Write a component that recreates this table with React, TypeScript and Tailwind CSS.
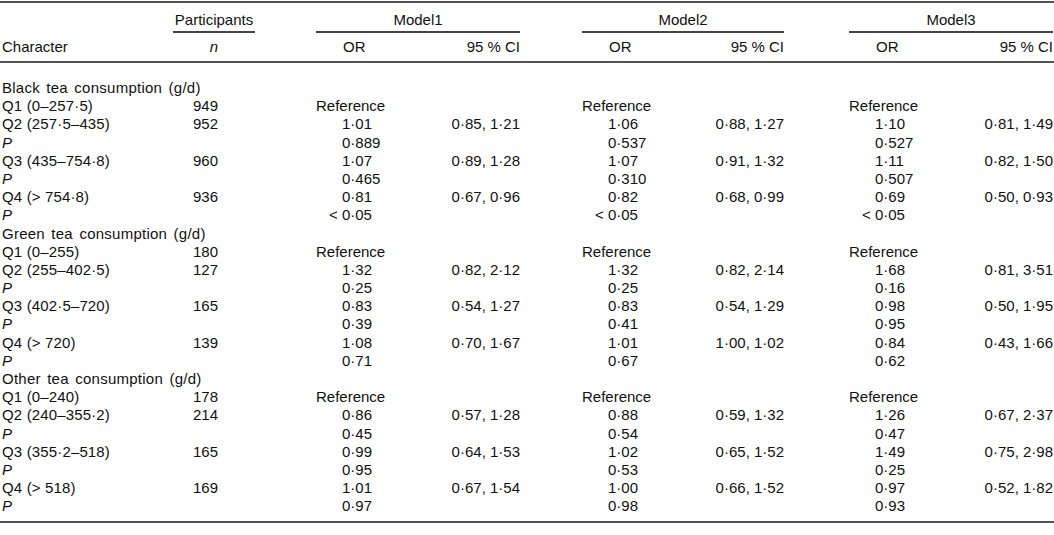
import React from 'react';

type Cell = { or?: string; ci?: string };
type Row = { label: string; italic?: boolean; n?: string; m?: Cell[]; group?: boolean };

// 表の列幅 (px)
const cols = 'grid grid-cols-[173px_82px_61px_204px_62px_202px_65px_204px_1fr]';

const ref: Cell[] = [{ or: 'Reference' }, { or: 'Reference' }, { or: 'Reference' }];
const lt: Cell[] = [{ or: '< 0·05' }, { or: '< 0·05' }, { or: '< 0·05' }];
const q = (a: string, b: string, c: string, d: string, e: string, f: string): Cell[] => [
  { or: a, ci: b },
  { or: c, ci: d },
  { or: e, ci: f },
];
const p = (a: string, b: string, c: string): Cell[] => [{ or: a }, { or: b }, { or: c }];

const rows: Row[] = [
  { label: 'Black tea consumption (g/d)', group: true },
  { label: 'Q1 (0–257·5)', n: '949', m: ref },
  { label: 'Q2 (257·5–435)', n: '952', m: q('1·01', '0·85, 1·21', '1·06', '0·88, 1·27', '1·10', '0·81, 1·49') },
  { label: 'P', italic: true, m: p('0·889', '0·537', '0·527') },
  { label: 'Q3 (435–754·8)', n: '960', m: q('1·07', '0·89, 1·28', '1·07', '0·91, 1·32', '1·11', '0·82, 1·50') },
  { label: 'P', italic: true, m: p('0·465', '0·310', '0·507') },
  { label: 'Q4 (> 754·8)', n: '936', m: q('0·81', '0·67, 0·96', '0·82', '0·68, 0·99', '0·69', '0·50, 0·93') },
  { label: 'P', italic: true, m: lt },
  { label: 'Green tea consumption (g/d)', group: true },
  { label: 'Q1 (0–255)', n: '180', m: ref },
  { label: 'Q2 (255–402·5)', n: '127', m: q('1·32', '0·82, 2·12', '1·32', '0·82, 2·14', '1·68', '0·81, 3·51') },
  { label: 'P', italic: true, m: p('0·25', '0·25', '0·16') },
  { label: 'Q3 (402·5–720)', n: '165', m: q('0·83', '0·54, 1·27', '0·83', '0·54, 1·29', '0·98', '0·50, 1·95') },
  { label: 'P', italic: true, m: p('0·39', '0·41', '0·95') },
  { label: 'Q4 (> 720)', n: '139', m: q('1·08', '0·70, 1·67', '1·01', '1·00, 1·02', '0·84', '0·43, 1·66') },
  { label: 'P', italic: true, m: p('0·71', '0·67', '0·62') },
  { label: 'Other tea consumption (g/d)', group: true },
  { label: 'Q1 (0–240)', n: '178', m: ref },
  { label: 'Q2 (240–355·2)', n: '214', m: q('0·86', '0·57, 1·28', '0·88', '0·59, 1·32', '1·26', '0·67, 2·37') },
  { label: 'P', italic: true, m: p('0·45', '0·54', '0·47') },
  { label: 'Q3 (355·2–518)', n: '165', m: q('0·99', '0·64, 1·53', '1·02', '0·65, 1·52', '1·49', '0·75, 2·98') },
  { label: 'P', italic: true, m: p('0·95', '0·53', '0·25') },
  { label: 'Q4 (> 518)', n: '169', m: q('1·01', '0·67, 1·54', '1·00', '0·66, 1·52', '0·97', '0·52, 1·82') },
  { label: 'P', italic: true, m: p('0·97', '0·98', '0·93') },
];

function ModelCell({ cell }: { cell?: Cell }) {
  const or = cell?.or ?? '';
  let orClass = 'pl-[26px]';
  if (or === 'Reference') orClass = 'pl-0';
  else if (or.startsWith('<')) orClass = 'pl-[13px]';
  return (
    <div className="flex justify-between">
      <span className={orClass}>{or}</span>
      <span>{cell?.ci ?? ''}</span>
    </div>
  );
}

function BodyRow({ row }: { row: Row }) {
  let labelClass = 'pl-[2px]';
  if (row.italic) labelClass += ' italic';
  else if (row.group) labelClass += ' col-span-3 tracking-[0.25px] [word-spacing:2px]';
  else labelClass += ' tracking-[0.15px]';
  return (
    <div className={`${cols} h-[18.2px] leading-[18.2px] whitespace-nowrap`}>
      <div className={labelClass}>{row.label}</div>
      {!row.group && (
        <>
          <div className="pl-[20px]">{row.n ?? ''}</div>
          <div />
          <ModelCell cell={row.m?.[0]} />
          <div />
          <ModelCell cell={row.m?.[1]} />
          <div />
          <ModelCell cell={row.m?.[2]} />
          <div />
        </>
      )}
    </div>
  );
}

export default function App() {
  const models = ['Model1', 'Model2', 'Model3'];
  return (
    <div
      className="w-[1054px] h-[535px] bg-white text-[#111] text-[15px] overflow-hidden pt-[1px]"
      style={{ fontFamily: '"Liberation Sans", Arial, Helvetica, sans-serif' }}
    >
      <div className="h-[2px] bg-[#555]" />

      {/* ヘッダー1段目 */}
      <div className={`${cols} h-[28px] leading-[18px] pt-[8px]`}>
        <div />
        <div className="text-center">Participants</div>
        <div />
        <div className="text-center">{models[0]}</div>
        <div />
        <div className="text-center">{models[1]}</div>
        <div />
        <div className="text-center">{models[2]}</div>
        <div />
      </div>
      <div className={`${cols} h-[2px]`}>
        <div />
        <div className="h-[1.5px] bg-[#444]" />
        <div />
        <div className="h-[1.5px] bg-[#444]" />
        <div />
        <div className="h-[1.5px] bg-[#444]" />
        <div />
        <div className="h-[1.5px] bg-[#444]" />
        <div />
      </div>

      {/* ヘッダー2段目 */}
      <div className={`${cols} h-[28px] leading-[18px] pt-[5px]`}>
        <div className="pl-[2px]">Character</div>
        <div className="text-center italic">n</div>
        <div />
        {[0, 1, 2].map((i) => (
          <React.Fragment key={i}>
            <div className="flex justify-between">
              <span className="pl-[27px]">OR</span>
              <span>95 % CI</span>
            </div>
            <div />
          </React.Fragment>
        ))}
      </div>
      <div className="h-[2px] bg-[#555]" />

      {/* 本文 */}
      <div className="pt-[16px]">
        {rows.map((r, i) => (
          <BodyRow key={i} row={r} />
        ))}
      </div>
      <div className="mt-[5px] h-[2px] bg-[#555]" />
    </div>
  );
}
